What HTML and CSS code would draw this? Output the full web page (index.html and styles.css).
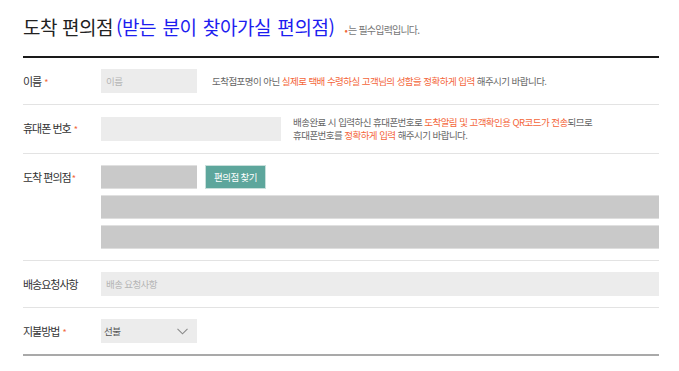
FILE: index.html
```html
<!DOCTYPE html>
<html lang="ko">
<head>
<meta charset="utf-8">
<title>도착 편의점</title>
<link rel="stylesheet" href="styles.css">
</head>
<body>
<div class="wrap">
  <div class="head">
    <h2 class="title">도착 편의점<span class="blue">(받는 분이 찾아가실 편의점)</span></h2>
    <span class="req-note"><span class="dot">•</span>는 필수입력입니다.</span>
  </div>

  <div class="row">
    <div class="label">이름<span class="star">*</span></div>
    <div class="field inline">
      <div class="input w96 light"><span class="ph">이름</span></div>
      <p class="help">도착점포명이 아닌 <em>실제로 택배 수령하실 고객님의 성함을 정확하게 입력</em> 해주시기 바랍니다.</p>
    </div>
  </div>

  <div class="row">
    <div class="label">휴대폰 번호<span class="star">*</span></div>
    <div class="field inline">
      <div class="input w180 light"></div>
      <p class="help help2">배송완료 시 입력하신 휴대폰번호로 <em>도착알림 및 고객확인용 QR코드가 전송</em>되므로<br>휴대폰번호를 <em>정확하게 입력</em> 해주시기 바랍니다.</p>
    </div>
  </div>

  <div class="row">
    <div class="label top">도착 편의점<span class="star tight">*</span></div>
    <div class="field stack">
      <div class="inline">
        <div class="input w96 dark"></div>
        <button class="btn">편의점 찾기</button>
      </div>
      <div class="input full dark"></div>
      <div class="input full dark"></div>
    </div>
  </div>

  <div class="row">
    <div class="label">배송요청사항</div>
    <div class="field inline">
      <div class="input full light"><span class="ph">배송 요청사항</span></div>
    </div>
  </div>

  <div class="row last">
    <div class="label">지불방법<span class="star">*</span></div>
    <div class="field inline">
      <div class="select">
        <span class="sel-text">선불</span>
        <svg class="chev" width="11" height="7" viewBox="0 0 11 7"><path d="M0.5 0.8 L5.5 5.8 L10.5 0.8" fill="none" stroke="#8a8a8a" stroke-width="1.1"/></svg>
      </div>
    </div>
  </div>
</div>
</body>
</html>
```

FILE: styles.css
```css
* { box-sizing: border-box; }
html, body { margin: 0; padding: 0; background: #fff; }
body {
  font-family: "Noto Sans CJK KR", "Noto Sans", sans-serif;
  color: #333;
}
.wrap {
  width: 636px;
  margin-left: 23px;
}
.head {
  height: 58px;
  display: flex;
  align-items: center;
  border-bottom: 2px solid #1a1a1a;
  padding-bottom: 2px;
}
.title {
  margin: 0;
  font-size: 19px;
  font-weight: 400;
  letter-spacing: -0.45px;
  color: #222;
  line-height: 26px;
}
.title .blue {
  color: #1d1df0;
  word-spacing: 1.5px;
  margin-left: 3px;
}
.req-note {
  margin-left: 10px;
  margin-top: 5px;
  font-size: 10px;
  letter-spacing: -0.8px;
  color: #777;
}
.req-note .dot { color: #f26a3d; margin-right: 1px; }

.row {
  display: flex;
  padding: 11px 0 11px;
  border-bottom: 1px solid #e3e3e3;
}
.row.last { border-bottom: 2px solid #a9a9a9; }
.label {
  width: 78px;
  flex: none;
  height: 24px;
  display: flex;
  align-items: center;
  font-size: 11px;
  letter-spacing: -1px;
  color: #333;
}
.star {
  color: #f26a3d;
  font-size: 9px;
  margin-left: 3px;
  position: relative;
  top: 1px;
}
.star.tight { margin-left: 1px; }
.field { flex: 1; }
.inline { display: flex; align-items: center; }
.stack { display: flex; flex-direction: column; gap: 6px; }
.input {
  height: 24px;
  display: flex;
  align-items: center;
  padding-left: 5px;
}
.light { background: #ececec; }
.dark {
  background: #c9c9c9;
  border-top: 1px solid #e0e0e0;
  border-bottom: 1px solid #dedede;
}
.w96 { width: 96px; }
.w180 { width: 180px; }
.full { width: 100%; }
.ph {
  font-size: 9.5px;
  color: #b5b5b5;
  letter-spacing: -0.6px;
}
.help {
  margin: 0 0 0 15px;
  font-size: 9.5px;
  letter-spacing: -0.55px;
  color: #666;
  line-height: 13px;
}
.help.help2 { margin-left: 12px; }
.help em { font-style: normal; color: #f4663a; }
.btn {
  margin-left: 8px;
  width: 61px;
  height: 24px;
  padding: 0;
  background: #5da69c;
  border: 1px solid #c8dfdb;
  color: #fff;
  font-family: inherit;
  font-size: 9.5px;
  letter-spacing: -0.6px;
}
.select {
  width: 96px;
  height: 24px;
  background: #ececec;
  display: flex;
  align-items: center;
  justify-content: space-between;
  padding: 0 9px 0 3px;
}
.sel-text { font-size: 9.5px; color: #555; letter-spacing: -0.6px; }
.chev { display: block; }
```
